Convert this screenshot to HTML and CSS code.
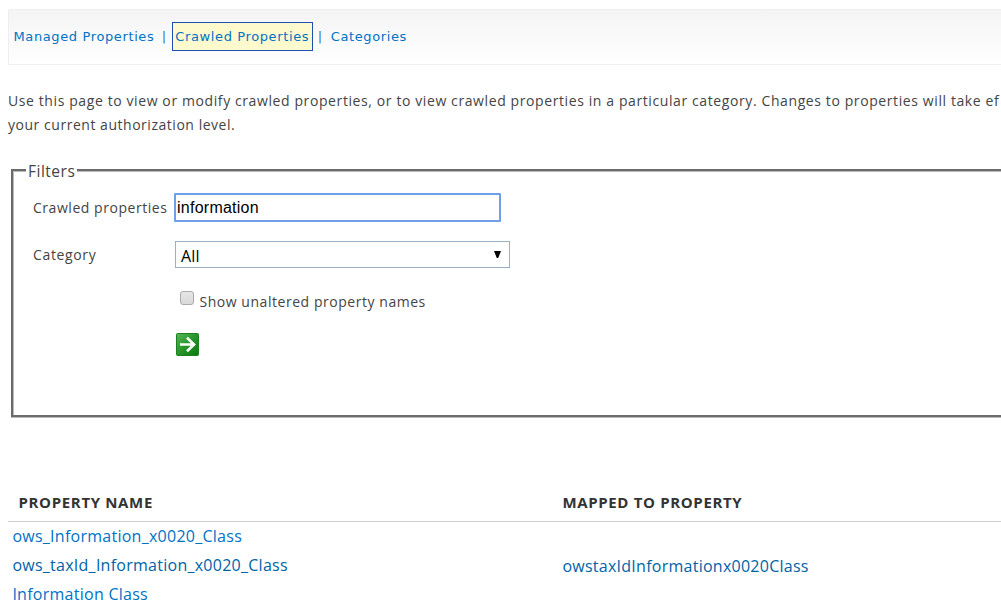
FILE: index.html
```html
<!DOCTYPE html>
<html lang="en">
<head>
<meta charset="utf-8">
<title>Crawled Properties</title>
<link rel="stylesheet" href="styles.css">
</head>
<body>
<nav class="tabs">
  <a class="tab tab-managed" href="#">Managed Properties</a><span class="sep">|</span><a class="tab tab-current" href="#">Crawled Properties</a><span class="sep">|</span><a class="tab tab-categories" href="#">Categories</a>
</nav>
<p class="intro">Use this page to view or modify crawled properties, or to view crawled properties in a particular category. Changes to properties will take ef<br><span class="intro-end">your current authorization level.</span></p>
<fieldset class="filters">
  <legend class="legend">Filters</legend>
  <div class="row row-query">
    <label class="label" for="query">Crawled properties</label>
    <input class="query" id="query" type="text" value="information">
  </div>
  <div class="row row-category">
    <span class="label label-category">Category</span>
    <div class="select"><span>All</span><svg class="caret" viewBox="0 0 7 7"><path d="M0 0H7L4.2 7H2.8Z"/></svg></div>
  </div>
  <div class="row-check"><span class="checkbox"></span><span class="check-text">Show unaltered property names</span></div>
  <svg class="go" viewBox="0 0 23 23">
    <defs><linearGradient id="green" x1="0" y1="0" x2="1" y2="1"><stop offset="0" stop-color="#58b858"/><stop offset=".5" stop-color="#28952b"/><stop offset="1" stop-color="#087a0b"/></linearGradient></defs>
    <rect x=".5" y=".5" width="22" height="22" rx="1" fill="url(#green)" stroke="#1c8020"/>
    <path d="M4 11.5H18M11 4.8L18 11.5L11 18.2" fill="none" stroke="#fff" stroke-width="2.6"/>
  </svg>
</fieldset>
<div class="results">
  <div class="cell head">PROPERTY NAME</div>
  <div class="cell head head-right">MAPPED TO PROPERTY</div>
  <a class="cell" href="#">ows_Information_x0020_Class</a><span class="cell"></span>
  <a class="cell visited" href="#">ows_taxId_Information_x0020_Class</a><a class="cell visited mapped" href="#">owstaxIdInformationx0020Class</a>
  <a class="cell" href="#">Information Class</a><span class="cell"></span>
</div>
</body>
</html>
```
FILE: styles.css
```css
* { box-sizing: border-box; }
body { margin: 0; height: 615px; overflow: hidden; background: #fff; color: #444; font: 14px/24px "Open Sans", sans-serif; letter-spacing: .54px; padding: 9px 0 0 8px; }
a { color: #0072c6; text-decoration: none; }
.tabs { display: flex; align-items: center; height: 56px; border: 1px solid #eee; border-right: 0; background: linear-gradient(#f4f4f4, #fff); padding: 0 0 1px 4.5px; font: 13px/27px "DejaVu Sans", sans-serif; letter-spacing: .62px; color: #3b74b4; }
.tab-current { width: 141px; margin: 0 4px 0 5px; padding: 0 0 0 2.6px; border: 1px solid #1e50b4; background: #fffacd; white-space: nowrap; }
.sep { width: 5px; margin-left: 7.3px; }
.tab-current + .sep { margin: 0 8px 0 1px; }
.intro { margin: 24px 0 0; white-space: nowrap; letter-spacing: .6px; }
.intro-end { letter-spacing: .53px; }
.filters { margin: 20px -20px 0 3px; height: 260px; border: 2px solid #6b6b6b; box-shadow: inset 1px 1px #bbb, 0 1px #bbb; padding: 10px 0 0 20px; }
.legend { margin-left: -7px; padding: 2px 2px 0; background: #fff; font-size: 15.5px; letter-spacing: .5px; }
.row { display: flex; align-items: center; }
.label { width: 141px; }
.label-category { width: 142px; letter-spacing: .65px; }
.query { width: 327px; height: 29px; border: 2px solid #6f9fea; border-radius: 1px; outline: none; padding: 0 1px; font: 16px "Liberation Sans", sans-serif; letter-spacing: .25px; color: #000; }
.select { display: flex; justify-content: space-between; align-items: center; width: 335px; height: 27px; border: 1px solid #9bb0c5; padding: 2px 8px 0 5px; color: #000; font-size: 16px; letter-spacing: .2px; }
.caret { width: 7px; height: 7px; margin-top: -3px; }
.row-category { margin-top: 19px; }
.row-check { display: flex; align-items: center; margin: 22px 0 0 147px; }
.checkbox { width: 14px; height: 14px; margin-top: -8px; border: 1px solid #aaa; border-radius: 3px; background: linear-gradient(#e6e6e6, #d8d8d8); }
.check-text { margin-left: 5.5px; }
.go { display: block; width: 23px; height: 23px; margin: 19px 0 0 143px; }
.results { display: grid; grid-template-columns: 550px 1fr; margin-top: 68px; font-size: 16px; line-height: 29px; letter-spacing: .26px; }
.cell { padding-left: 4.4px; }
.visited { color: #0063a8; }
.mapped { padding-top: 1px; height: 29px; }
.head { height: 37px; border-bottom: 1px solid #c8d0d0; font: bold 15px/35px "Open Sans", sans-serif; letter-spacing: .65px; color: #333; padding-left: 10.5px; }
.head-right { padding-left: 4.4px; }
```
